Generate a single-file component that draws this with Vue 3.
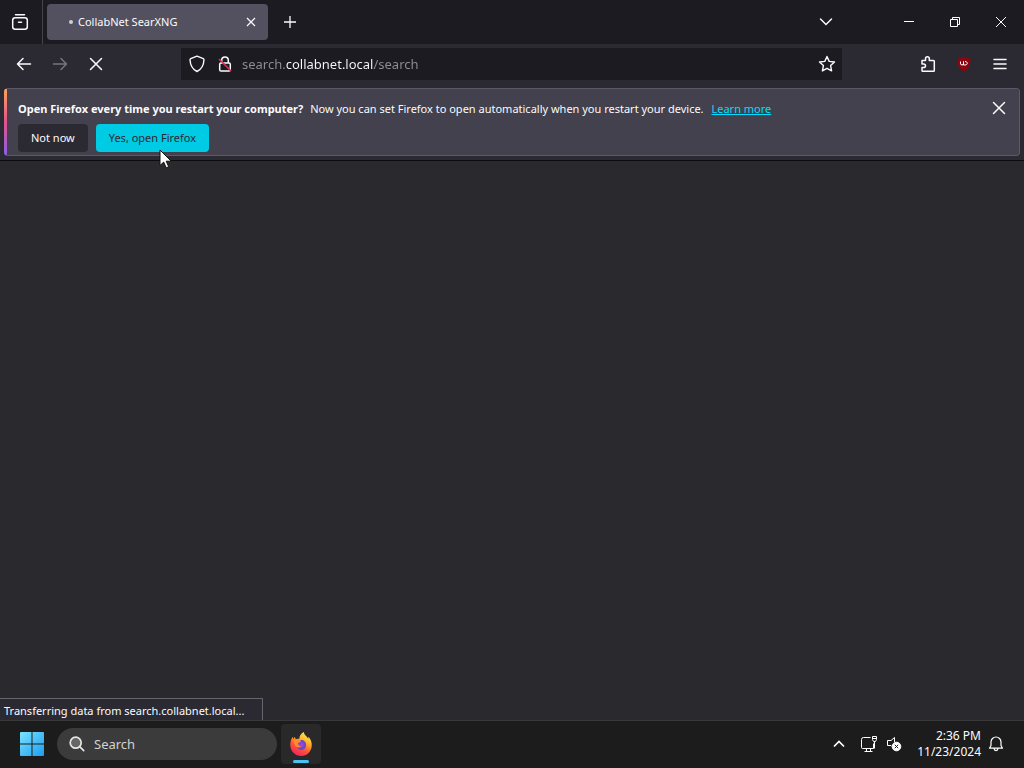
<script setup>
import { ref } from 'vue'

const address = ref('search.collabnet.local/search')
const query = ref('')
</script>

<template>
  <div class="desktop">
    <header class="tabs">
      <button class="icon view" aria-label="Firefox View">
        <svg width="20" height="20" viewBox="0 0 20 20" fill="none" stroke="#fbfbfe" stroke-width="1.5" stroke-linecap="round">
          <path d="M5.500 2.800h9" />
          <rect x="2.700" y="5.700" width="14.600" height="11.600" rx="2.500" />
          <path d="M8.500 10.300h3" />
        </svg>
      </button>
      <div class="tab">
        <span class="dot"></span>
        <span class="title">CollabNet SearXNG</span>
        <button class="icon close" aria-label="Close tab">
          <svg width="10" height="10" viewBox="0 0 10 10" stroke="#fbfbfe" stroke-width="1.200"><path d="M1 1l8 8M9 1l-8 8" /></svg>
        </button>
      </div>
      <button class="icon add" aria-label="New tab">
        <svg width="14" height="14" viewBox="0 0 14 14" stroke="#fbfbfe" stroke-width="1.300"><path d="M7 1v12M1 7h12" /></svg>
      </button>
      <div class="window">
        <button class="icon list" aria-label="List all tabs">
          <svg width="14" height="10" viewBox="0 0 14 10" fill="none" stroke="#fbfbfe" stroke-width="1.500" stroke-linecap="round"><path d="M1.500 2L7 7.500 12.500 2" /></svg>
        </button>
        <button class="icon wide" aria-label="Minimize">
          <svg width="12" height="12" viewBox="0 0 12 12" stroke="#fff"><path d="M1 5.500h10" /></svg>
        </button>
        <button class="icon wide" aria-label="Restore">
          <svg width="12" height="12" viewBox="0 0 12 12" fill="none" stroke="#fff"><path d="M1.500 3.500h7v7h-7zM3.500 3.500v-2h7v7h-2" /></svg>
        </button>
        <button class="icon wide" aria-label="Close">
          <svg width="12" height="12" viewBox="0 0 12 12" stroke="#fff"><path d="M1 1l10 10M11 1L1 11" /></svg>
        </button>
      </div>
    </header>

    <nav class="bar">
      <div class="moves">
        <button class="icon" aria-label="Back">
          <svg width="16" height="14" viewBox="0 0 16 14" fill="none" stroke="#fbfbfe" stroke-width="1.500" stroke-linecap="round" stroke-linejoin="round"><path d="M14.500 7H1.500M7 1.500L1.500 7 7 12.500" /></svg>
        </button>
        <button class="icon" aria-label="Forward" disabled>
          <svg width="16" height="14" viewBox="0 0 16 14" fill="none" stroke="#77767d" stroke-width="1.500" stroke-linecap="round" stroke-linejoin="round"><path d="M1.500 7h13M9 1.500L14.500 7 9 12.500" /></svg>
        </button>
        <button class="icon" aria-label="Stop">
          <svg width="14" height="14" viewBox="0 0 14 14" stroke="#fbfbfe" stroke-width="1.500" stroke-linecap="round"><path d="M1.500 1.500l11 11M12.500 1.500l-11 11" /></svg>
        </button>
      </div>
      <div class="url">
        <button class="icon small" aria-label="Tracking protection">
          <svg width="16" height="18" viewBox="0 0 16 18" fill="none" stroke="#fbfbfe" stroke-width="1.400" stroke-linejoin="round"><path d="M8 1.200l6.300 2.500c.5.200.7.500.7 1C14.700 10 13 14 8 16.500 3 14 1.300 10 1 4.700c0-.5.200-.8.700-1z" /></svg>
        </button>
        <button class="icon small" aria-label="Connection is not secure">
          <svg width="16" height="18" viewBox="0 0 16 18" fill="none" stroke="#fbfbfe" stroke-width="1.500"><rect x="2.700" y="8" width="10.600" height="8" rx="1.300" /><path d="M4.700 8V5.200a3.300 3.300 0 0 1 6.600 0V8" /><path d="M2 4l12 12" stroke="#e22850" stroke-width="1.700" /></svg>
        </button>
        <input v-model="address" type="text" aria-label="Address" spellcheck="false">
        <button class="icon small" aria-label="Bookmark this page">
          <svg width="18" height="18" viewBox="0 0 18 18" fill="none" stroke="#fbfbfe" stroke-width="1.400" stroke-linejoin="round"><path d="M9 1.500l2.200 4.900 5.300.6-3.900 3.600 1 5.300L9 13.300l-4.600 2.600 1-5.300L1.500 7l5.300-.6z" /></svg>
        </button>
      </div>
      <div class="tools">
        <button class="icon" aria-label="Extensions">
          <svg width="16" height="18" viewBox="0 0 16 18" fill="none" stroke="#fbfbfe" stroke-width="1.500" stroke-linejoin="round"><path d="M2 5.500h3.500V3.700a1.900 1.900 0 0 1 3.800 0v1.800h4.200c.5 0 .8.300.8.800v9.200c0 .5-.3.800-.8.800H2.800c-.5 0-.8-.3-.8-.8v-3h1.700a1.800 1.800 0 0 0 0-3.600H2z" /></svg>
        </button>
        <button class="icon" aria-label="uBlock Origin">
          <svg width="16" height="16" viewBox="0 0 16 16"><path d="M8 .5c2 1.500 4 1.800 6.500 2 .5 6-1.500 10.500-6.500 13C3 13 1 8.500 1.500 2.500 4 2.300 6 2 8 .5z" fill="#8c0510" /><path d="M4.500 5.500v2.300c0 1.600 3 1.600 3 0V5.500M7.500 5.500v3.500h1.500c3 0 3-3.500 0-3.500" fill="none" stroke="#fff" /></svg>
        </button>
        <button class="icon" aria-label="Open application menu">
          <svg width="14" height="12" viewBox="0 0 14 12" stroke="#fbfbfe" stroke-width="1.500" stroke-linecap="round"><path d="M1 1.500h12M1 6h12M1 10.500h12" /></svg>
        </button>
      </div>
    </nav>

    <section class="notice">
      <div class="message">
        <p><strong>Open Firefox every time you restart your computer?</strong> <span>Now you can set Firefox to open automatically when you restart your device.</span> <a href="#">Learn more</a></p>
        <div class="actions">
          <button class="action">Not now</button>
          <button class="action primary">Yes, open Firefox</button>
          <svg class="pointer" width="14" height="20" viewBox="0 0 14 20"><path d="M1 1v15.500l3.700-3.400 2.500 5.700 2.500-1.100-2.500-5.500h5z" fill="#fff" stroke="#111" /></svg>
        </div>
      </div>
      <button class="icon dismiss" aria-label="Close notification">
        <svg width="14" height="14" viewBox="0 0 14 14" stroke="#fbfbfe" stroke-width="1.500" stroke-linecap="round"><path d="M1.500 1.500l11 11M12.500 1.500l-11 11" /></svg>
      </button>
    </section>

    <main class="page">
      <div class="status" role="status">Transferring data from search.collabnet.local...</div>
    </main>

    <footer class="taskbar">
      <button class="icon start" aria-label="Start">
        <svg width="24" height="24" viewBox="0 0 24 24">
          <defs><linearGradient id="win" x1="0" y1="0" x2="1" y2="1"><stop offset="0" stop-color="#7be3fd" /><stop offset="1" stop-color="#1b9df0" /></linearGradient></defs>
          <path d="M1 0h10.500v11.500H0V1a1 1 0 0 1 1-1zM12.500 0H23a1 1 0 0 1 1 1v10.500H12.500zM0 12.500h11.500V24H1a1 1 0 0 1-1-1zM12.500 12.500H24V23a1 1 0 0 1-1 1H12.500z" fill="url(#win)" />
        </svg>
      </button>
      <label class="search">
        <svg width="16" height="16" viewBox="0 0 16 16" fill="#666" stroke="#e6e6e6" stroke-width="1.700" stroke-linecap="round"><circle cx="6.700" cy="6.700" r="5.500" /><path d="M10.700 10.700l4 4" /></svg>
        <input v-model="query" type="search" placeholder="Search" aria-label="Search">
      </label>
      <button class="icon app" aria-label="Firefox">
        <svg width="24" height="26" viewBox="0 0 26 26" preserveAspectRatio="none">
          <defs>
            <linearGradient id="fox" x1=".8" y1="0" x2=".3" y2="1"><stop offset="0" stop-color="#fff04a" /><stop offset=".35" stop-color="#ffb52c" /><stop offset=".65" stop-color="#ff5635" /><stop offset="1" stop-color="#ee2160" /></linearGradient>
            <radialGradient id="globe"><stop offset="0" stop-color="#a04be0" /><stop offset="1" stop-color="#6044c8" /></radialGradient>
          </defs>
          <path d="M16 1c.4 2.200 1.800 3.300 3.300 4.700l1.500 1.800.3-1.700c2.500 2.500 3.900 5.900 3.500 9.200C24 21 19.300 25 13.200 25 6.700 25 1.800 20.500 1.400 14.500 1.200 11.300 2.300 8 4 5.800l.6 2.300 1.800-2.400.8 2.600c1.400-.7 2.700-.8 4-.3C10.900 5.200 13 2.500 16 1z" fill="url(#fox)" />
          <circle cx="13.500" cy="14" r="5" fill="url(#globe)" />
          <path d="M5 9.500c2.500-1.800 5.700-1.600 8.200.5-.8 1.300-2 1.500-3.500 2 .2 2.300 1.900 3.400 3.800 3.300-1.500 1.500-4.500 1.600-6.500-.5C5.700 13.300 5 11.500 5 9.500z" fill="#ff8a2e" />
        </svg>
      </button>
      <div class="tray">
        <button class="icon chevron" aria-label="Show hidden icons">
          <svg width="12" height="8" viewBox="0 0 12 8" fill="none" stroke="#fff" stroke-width="1.700"><path d="M1 6.500l5-5 5 5" /></svg>
        </button>
        <button class="icon quick" aria-label="Network and sound">
          <svg width="18" height="18" viewBox="0 0 18 18" fill="none" stroke="#fff"><path d="M10.500 2.500h-7a2 2 0 0 0-2 2v8a1 1 0 0 0 1 1h11V8.500M6.500 13.500v3M10.500 13.500v3M4.500 16.500h8M12.500 1.500h4v3l-1 2h-2l-1-2zM14.500 6.500v7M12.500 3.500h4" /></svg>
          <svg width="16" height="16" viewBox="0 0 16 16" fill="none" stroke="#fff"><path d="M8.500 6V1.500L5 4.500H1.500v5H5l1 1" /><circle cx="10.500" cy="10.500" r="4.300" fill="#fff" /><path d="M8.800 8.800l3.400 3.400M12.200 8.800l-3.400 3.400" stroke="#1c1c1c" /></svg>
        </button>
        <time class="clock" datetime="2024-11-23T14:36"><span>2:36 PM</span><span>11/23/2024</span></time>
        <button class="icon bell" aria-label="Notifications">
          <svg width="16" height="16" viewBox="0 0 16 16" fill="none" stroke="#fff" stroke-width="1.200" stroke-linejoin="round"><path d="M1.500 12.200L3 9.500V6a5 5 0 0 1 10 0v3.500l1.500 2.700zM6 12.500c.3 2.700 3.700 2.700 4 0" /></svg>
        </button>
      </div>
    </footer>
  </div>
</template>

<style>
body {
  background: #2a292e;
}
</style>

<style scoped>
.desktop {
  display: flex;
  flex-direction: column;
  min-height: 100vh;
  background: #2b2a32;
  color: #fbfbfe;
  font: 11px/16px "Noto Sans", "Open Sans", sans-serif;
}

* {
  box-sizing: border-box;
}

button,
input {
  padding: 0;
  border: 0;
  background: none;
  color: inherit;
  font: inherit;
}

svg {
  display: block;
  flex: none;
}

.icon {
  display: flex;
  flex: none;
  align-items: center;
  justify-content: center;
  width: 36px;
  height: 32px;
}

.tabs {
  display: flex;
  align-items: center;
  height: 44px;
  background: #1c1b22;
}

.tabs .view {
  width: 43px;
  height: 44px;
  padding-right: 2px;
  border-right: 1px solid #45444c;
}

.tab {
  display: flex;
  align-items: center;
  width: 221px;
  height: 36px;
  margin-left: 4px;
  padding: 0 5px 0 22px;
  border-radius: 4px;
  background: #53515f;
}

.dot {
  width: 4px;
  height: 4px;
  margin-right: 5px;
  border-radius: 2px;
  background: #cfced6;
}

.title {
  flex: 1;
}

.tab .close {
  width: 24px;
  height: 24px;
}

.tabs .add {
  margin-left: 4px;
}

.window {
  display: flex;
  align-items: center;
  margin-left: auto;
}

.window .list {
  margin-right: 42px;
}

.window .wide {
  width: 46px;
}

.bar {
  display: flex;
  align-items: center;
  height: 40px;
  padding: 0 6px;
}

.moves,
.tools {
  display: flex;
  flex: none;
}

.url {
  display: flex;
  flex: 1;
  align-items: center;
  height: 32px;
  margin: 0 68px 0 67px;
  padding: 0 1px 0 2px;
  background: #1c1b22;
}

.url .small {
  width: 28px;
}

.url input {
  flex: 1;
  min-width: 0;
  height: 32px;
  margin-left: 3px;
  background: linear-gradient(90deg, #8f8e94 44px, #fbfbfe 44px 132px, #8f8e94 132px);
  background-clip: text;
  -webkit-text-fill-color: transparent;
  font-size: 13px;
}

.notice {
  display: flex;
  align-items: flex-start;
  margin: 4px 4px;
  padding: 6px 6px 3px 11px;
  border: 1px solid #5b5a66;
  border-left: 3px solid transparent;
  border-radius: 4px;
  background:
    linear-gradient(#42414d, #42414d) padding-box,
    linear-gradient(#ffa45c, #e2528c 50%, #8a5fe8) left / 3px 100% no-repeat border-box;
}

.message {
  flex: 1;
}

p {
  margin: 0;
  padding: 6px 0 7px;
}

p span {
  margin: 0 5px 0 4px;
}

a {
  color: #00ddff;
}

.actions {
  position: relative;
  display: flex;
  gap: 8px;
}

.action {
  height: 28px;
  padding: 0 13px;
  border-radius: 4px;
  background: #2b2a33;
}

.primary {
  background: #00cbe4;
  color: #2b2a33;
}

.pointer {
  position: absolute;
  top: 25px;
  left: 141px;
}

.notice .dismiss {
  width: 28px;
  height: 26px;
}

.page {
  display: flex;
  flex: 1;
  align-items: flex-end;
  border-top: 1px solid #0c0c0d;
  background: #2a292e;
}

.status {
  padding: 4px 18px 1px 4px;
  border: 1px solid #66656d;
  border-width: 1px 1px 0 0;
  background: #2b2a32;
}

.taskbar {
  display: flex;
  align-items: center;
  height: 48px;
  padding: 0 13px 1px 0;
  border-top: 1px solid #39393b;
  background: #1c1c1c;
}

.start {
  width: 40px;
  height: 40px;
  margin: 0 5px 0 12px;
}

.search {
  display: flex;
  align-items: center;
  width: 220px;
  height: 32px;
  padding: 0 12px;
  gap: 9px;
  border-radius: 16px;
  background: #3b3b3b;
}

.search input {
  flex: 1;
  min-width: 0;
  font-size: 13px;
}

.search input::placeholder {
  color: #d2d2d2;
}

.app {
  position: relative;
  width: 40px;
  height: 40px;
  margin-left: 4px;
  border-radius: 4px;
  background: #292929;
}

.app::after {
  position: absolute;
  bottom: 1px;
  left: 12px;
  width: 16px;
  height: 3px;
  border-radius: 2px;
  background: #4cc2f1;
  content: "";
}

.tray {
  display: flex;
  align-items: center;
  margin-left: auto;
}

.tray .chevron {
  width: 40px;
}

.tray .quick {
  width: 44px;
  gap: 8px;
}

.clock {
  display: flex;
  flex-direction: column;
  margin-left: 14px;
  font-size: 12px;
  text-align: right;
}

.tray .bell {
  width: 30px;
}
</style>
